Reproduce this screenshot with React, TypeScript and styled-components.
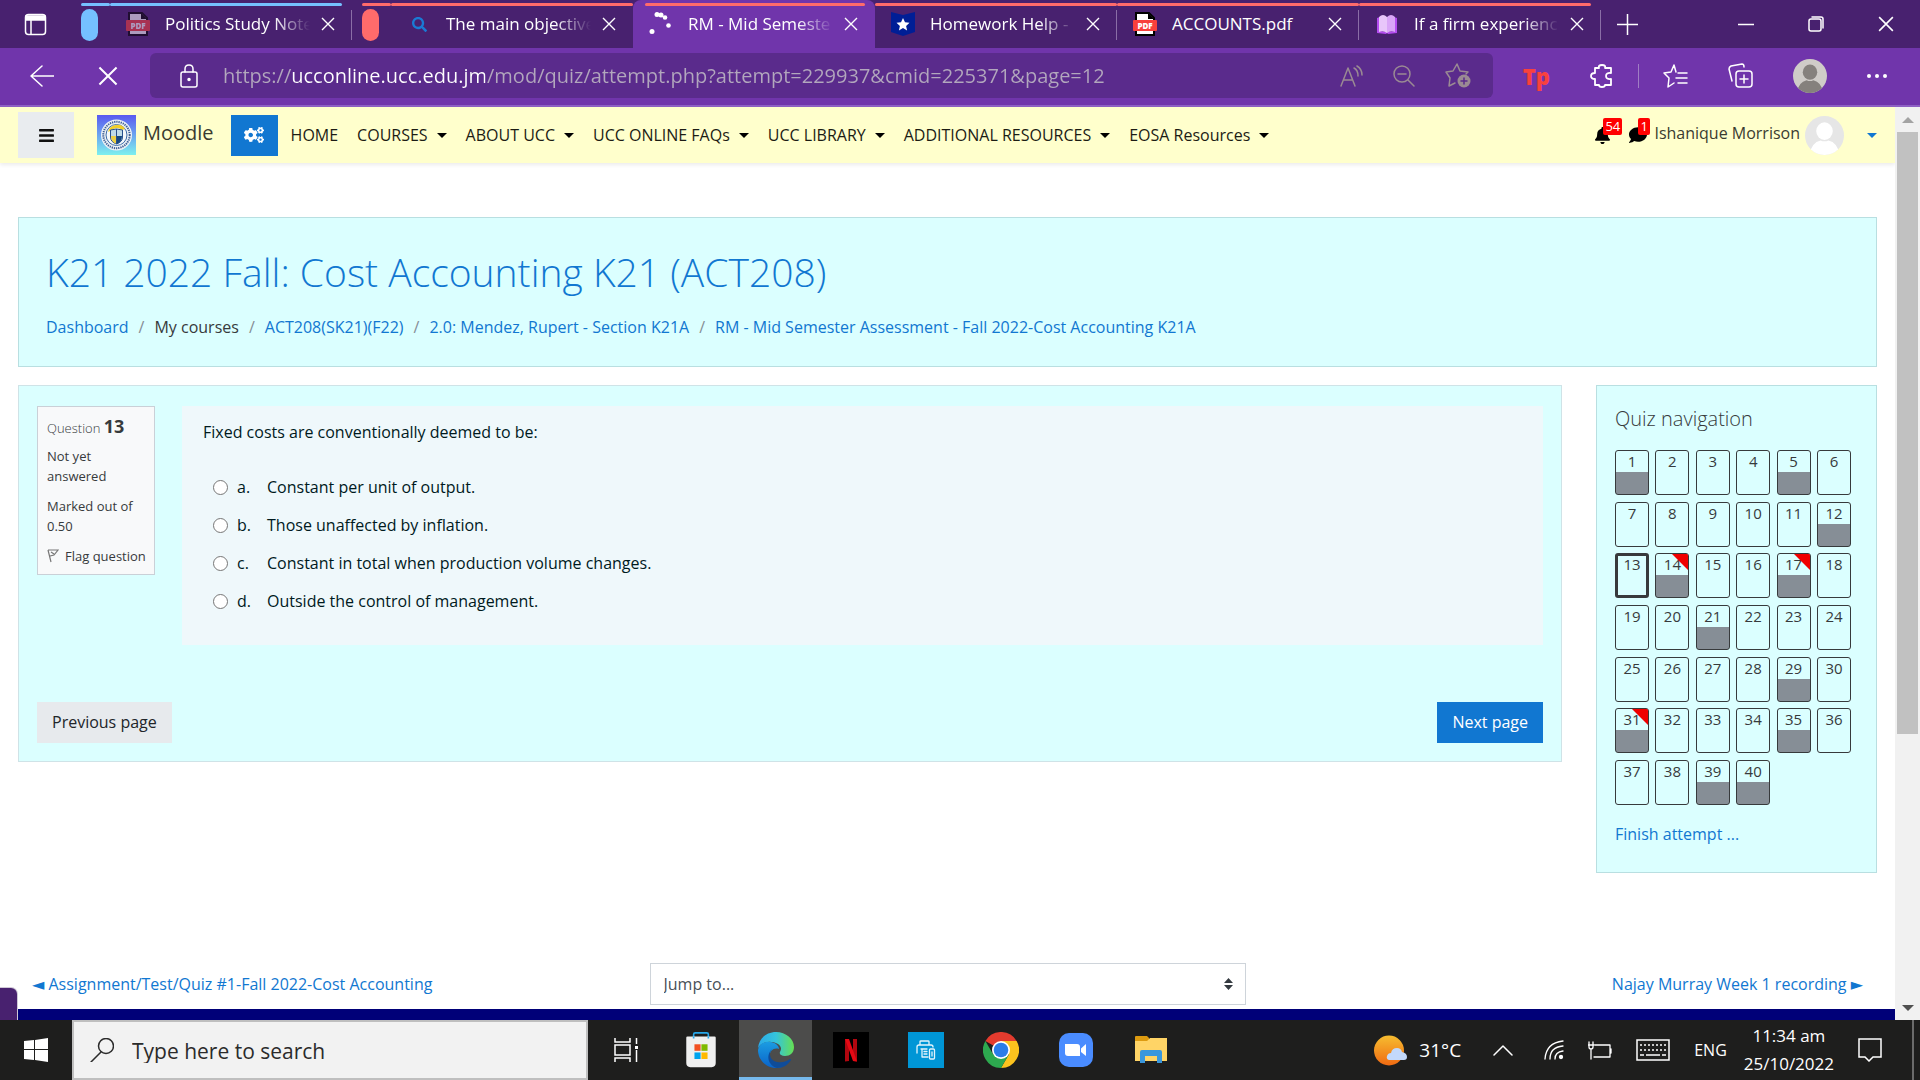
import React from "react";
import styled, { createGlobalStyle, css, keyframes } from "styled-components";
import { FaBars, FaBell, FaCogs, FaComment, FaSearch } from "react-icons/fa";

const GlobalStyle = createGlobalStyle`
  *, *::before, *::after { box-sizing: border-box; }
  body { margin: 0; overflow: hidden; }
  button, input, select { font: inherit; color: inherit; }
  button { border: 0; padding: 0; background: none; cursor: pointer; }
  a { text-decoration: none; }
  svg { display: block; flex: none; }
`;

const Screen = styled.div`
  display: flex;
  flex-direction: column;
  height: 100vh;
  font-family: "Open Sans", "Noto Sans", sans-serif;
  font-size: 16px;
  line-height: 24px;
  color: #373a3c;
  background: #fff;
`;

/* ---------- Tab strip ---------- */

const TabStrip = styled.header`
  display: flex;
  flex: none;
  height: 48px;
  padding-left: 24px;
  background: #48216f;
  color: #fff;
  white-space: nowrap;
`;

const TabActions = styled.button`
  display: flex;
  align-items: center;
  width: 57px;
`;

const TabGroup = styled.div`
  display: flex;
  margin-right: 10px;
`;

const Accent = styled.div<{ $color: string; $start?: boolean; $end?: boolean }>`
  height: 3px;
  margin: 3px ${(p) => (p.$end ? 10 : 0)}px 0 ${(p) => (p.$start ? 12 : 0)}px;
  background: ${(p) => p.$color};
  border-radius: 2px;
`;

const GroupLabel = styled.div`
  width: 29px;
`;

const Pill = styled.div<{ $color: string }>`
  width: 17px;
  height: 32px;
  margin-top: 3px;
  border-radius: 9px;
  background: ${(p) => p.$color};
`;

const Tab = styled.div<{ $active?: boolean; $divider?: boolean }>`
  position: relative;
  flex: 0 1 242px;
  width: 242px;
  ${(p) => p.$active && css`background: #7035ab; border-radius: 8px 8px 0 0;`}
  ${(p) =>
    p.$divider &&
    css`
      &::after {
        content: "";
        position: absolute;
        right: 0;
        top: 10px;
        width: 1px;
        height: 30px;
        background: #8a6ea6;
      }
    `}
`;

const TabBody = styled.div`
  display: flex;
  align-items: center;
  height: 36px;
  padding: 0 16px;
`;

const TabIcon = styled.span`
  display: flex;
  justify-content: center;
  width: 24px;
  margin-right: 15px;
`;

const TabTitle = styled.span<{ $fade?: boolean }>`
  flex: 0 0 145px;
  margin-right: 11px;
  overflow: hidden;
  font-size: 17px;
  ${(p) => p.$fade && css`mask-image: linear-gradient(90deg, #000 75%, transparent);`}
`;

const NewTab = styled.button`
  margin-left: 6px;
`;

const WindowControls = styled.div`
  display: flex;
  align-items: center;
  gap: 54px;
  margin-left: auto;
  padding-right: 26px;
`;

/* ---------- Address toolbar ---------- */

const Toolbar = styled.div`
  display: flex;
  flex: none;
  align-items: center;
  height: 59px;
  padding: 0 33px 2px 30px;
  background: #7035ab;
  border-bottom: 2px solid #8e60c4;
  color: #fff;
`;

const NavButtons = styled.div`
  display: flex;
  align-items: center;
  gap: 44px;
  width: 120px;
`;

const AddressBar = styled.div`
  display: flex;
  flex: 1;
  align-items: center;
  height: 45px;
  padding: 0 22px 0 30px;
  border-radius: 6px;
  background: #5a2b8c;
`;

const AddressInput = styled.input`
  flex: 1;
  min-width: 0;
  margin-left: 25px;
  padding: 0;
  border: 0;
  outline: 0;
  font-size: 20px;
  background: linear-gradient(90deg, #b2a7bd 68px, #fff 68px, #fff 262px, #b2a7bd 262px);
  background-clip: text;
  color: transparent;
`;

const AddressTools = styled.div`
  display: flex;
  align-items: center;
  gap: 30px;
  color: #9a8a93;
`;

const Extensions = styled.div`
  display: flex;
  align-items: center;
  gap: 40px;
  margin-left: 30px;
`;

const TpMark = styled.span`
  font-size: 22px;
  font-weight: 800;
  color: #f8413e;
`;

const ToolDivider = styled.span`
  width: 1px;
  height: 24px;
  margin: 0 -16px;
  background: #a07ec4;
`;

/* ---------- Page ---------- */

const Viewport = styled.div`
  position: relative;
  display: flex;
  flex: 1;
  min-height: 0;
`;

const Page = styled.div`
  display: flex;
  flex: 1;
  flex-direction: column;
  min-width: 0;
`;

const SiteBar = styled.nav`
  display: flex;
  flex: none;
  align-items: center;
  height: 56px;
  padding: 0 18px;
  background: #ffffcc;
  box-shadow: 0 2px 4px rgba(0, 0, 0, 0.08);
  color: #1c1c14;
  white-space: nowrap;
`;

const DrawerToggle = styled.button`
  display: flex;
  align-items: center;
  justify-content: center;
  width: 56px;
  height: 46px;
  background: #e9ecef;
  color: #111;
`;

const Brand = styled.a`
  display: flex;
  align-items: center;
  gap: 7px;
  margin: 0 17px 0 23px;
  font-size: 20px;
  color: #33352c;
`;

const BarLabel = styled.span`
  padding-bottom: 4px;
  color: #3a3b30;
`;

const CogButton = styled.button`
  display: flex;
  align-items: center;
  justify-content: center;
  width: 47px;
  height: 41px;
  margin-right: 13px;
  background: #1177d1;
  color: #fff;
`;

const Menu = styled.div`
  display: flex;
  gap: 19px;
`;

const MenuLink = styled.a`
  color: inherit;
`;

const MenuButton = styled.button`
  display: flex;
  align-items: center;
  gap: 9px;
`;

const Caret = styled.span<{ $color?: string }>`
  border: 5px solid transparent;
  border-top-color: ${(p) => p.$color ?? "#000"};
  border-bottom: 0;
`;

const UserArea = styled.div`
  display: flex;
  align-items: center;
  gap: 5px;
  margin-left: auto;
`;

const Notices = styled.div`
  display: flex;
  gap: 18px;
  margin-right: 2px;
`;

const Notice = styled.button`
  position: relative;
  color: #000;
`;

const Badge = styled.span`
  position: absolute;
  left: 9px;
  top: -8px;
  padding: 0 2px;
  border-radius: 2px;
  background: #f00;
  color: #fff;
  font-size: 13px;
  line-height: 17px;
`;

const UserMenu = styled.button`
  display: flex;
  margin-left: 18px;
`;

const Content = styled.main`
  padding: 54px 18px 0;
`;

const Card = styled.section`
  border: 1px solid #b9dfe1;
  background: #dbffff;
`;

const CourseHeader = styled(Card)`
  height: 150px;
  padding: 27px 27px 0;
`;

const CourseTitle = styled.h1`
  margin: 0 0 16px;
  font-size: 39px;
  font-weight: 300;
  line-height: 54px;
  color: #1177d1;
`;

const Crumbs = styled.ol`
  display: flex;
  margin: 0;
  padding: 0;
  list-style: none;
  color: #373a3c;

  li + li::before {
    content: "/";
    padding: 0 10px;
    color: #868e96;
  }
`;

const TextLink = styled.a`
  color: #1177d1;
`;

const Columns = styled.div`
  display: grid;
  grid-template-columns: minmax(0, 1fr) 281px;
  gap: 34px;
  align-items: start;
  margin-top: 18px;
`;

const QuizCard = styled(Card)`
  padding: 20px 18px 18px;
  border-color: #cfe3e7;
`;

const Question = styled.div`
  display: flex;
  align-items: flex-start;
  gap: 27px;
`;

const Info = styled.aside`
  width: 118px;
  height: 169px;
  padding: 9px 9px 0;
  border: 1px solid #cad0d7;
  background: #f8f9fa;
  font-size: 13px;
  line-height: 20px;
`;

const InfoTitle = styled.h3`
  margin: 0 0 8px;
  font-size: 13px;
  font-weight: 300;
  line-height: 20px;

  b {
    font-size: 18px;
    font-weight: 700;
  }
`;

const InfoText = styled.p`
  margin: 0 0 10px;
`;

const FlagButton = styled.button`
  display: flex;
  align-items: center;
  gap: 6px;
  white-space: nowrap;
`;

const Formulation = styled.div`
  flex: 1;
  height: 239px;
  padding: 14px 21px 0;
  background: #eff8fb;
  color: #001a1e;
`;

const Prompt = styled.p`
  margin: 0;
`;

const Answers = styled.fieldset`
  margin: 24px 0 0;
  padding: 0 0 0 10px;
  border: 0;
`;

const Answer = styled.label`
  display: grid;
  grid-template-columns: 24px 30px 1fr;
  align-items: center;
  height: 38px;
`;

const Radio = styled.input`
  width: 15px;
  height: 15px;
  margin: 0;
  border: 1px solid #767676;
  border-radius: 50%;
  background: #fff;
  appearance: none;

  &:checked { box-shadow: inset 0 0 0 3px #fff; background: #1177d1; }
`;

const Pager = styled.div`
  display: flex;
  justify-content: space-between;
  margin-top: 57px;
`;

const PageButton = styled.button<{ $primary?: boolean }>`
  height: 41px;
  padding: 0 15px 2px 15px;
  background: ${(p) => (p.$primary ? "#1177d1" : "#e7eaed")};
  color: ${(p) => (p.$primary ? "#fff" : "#212529")};
`;

const NavCard = styled(Card)`
  height: 488px;
  padding: 18px 25px 0 18px;
`;

const NavTitle = styled.h2`
  margin: 0 0 16px;
  font-size: 20px;
  font-weight: 300;
  line-height: 30px;
`;

const NavGrid = styled.div`
  display: grid;
  grid-template-columns: repeat(6, 34px);
  justify-content: space-between;
  align-content: space-between;
  height: 355px;
  margin-bottom: 17px;
`;

const NavCell = styled.a<{ $answered?: boolean; $current?: boolean }>`
  position: relative;
  height: 45px;
  overflow: hidden;
  border: ${(p) => (p.$current ? 3 : 1)}px solid #373a3c;
  border-radius: 3px;
  background: ${(p) =>
    p.$answered ? "linear-gradient(transparent 21px, #868e96 21px)" : "transparent"};
  color: #373a3c;
  font-size: 15px;
  line-height: ${(p) => (p.$current ? 16 : 20)}px;
  text-align: center;
`;

const FlagCorner = styled.span`
  position: absolute;
  top: 0;
  right: 0;
  border: 8px solid #f00000;
  border-left-color: transparent;
  border-bottom-color: transparent;
`;

const ActivityNav = styled.div`
  display: grid;
  grid-template-columns: 1fr 596px 1fr;
  align-items: center;
  margin-top: auto;
  padding: 0 32px 4px;
`;

const ActivityLink = styled(TextLink)<{ $end?: boolean }>`
  justify-self: ${(p) => (p.$end ? "end" : "start")};
`;

const Pointer = styled.span`
  font-family: "DejaVu Sans", sans-serif;
  font-size: 16px;
`;

const JumpBox = styled.div`
  position: relative;
`;

const JumpSelect = styled.select`
  width: 100%;
  height: 42px;
  padding: 0 13px;
  border: 1px solid #ced4da;
  background: #fff;
  color: #495057;
  appearance: none;
`;

const JumpArrows = styled.svg`
  position: absolute;
  right: 13px;
  top: 15px;
`;

const FooterEdge = styled.footer`
  flex: none;
  height: 11px;
  background: #000078;
`;

const StatusStub = styled.div`
  position: absolute;
  left: 0;
  bottom: 0;
  width: 17px;
  height: 32px;
  border-radius: 0 6px 0 0;
  background: #48216f;
  box-shadow: 0 0 0 1px #cfc8d6;
  clip-path: inset(-1px -1px 0 0);
`;

const ScrollTrack = styled.div`
  display: flex;
  flex: none;
  flex-direction: column;
  align-items: center;
  width: 25px;
  padding: 10px 0 9px;
  background: #f1f1f1;
`;

const ScrollArrow = styled.span<{ $down?: boolean }>`
  border: 6px solid transparent;
  ${(p) =>
    p.$down
      ? css`border-top-color: #505050; border-bottom: 0;`
      : css`border-bottom-color: #a3a3a3; border-top: 0;`}
`;

const ScrollArea = styled.div`
  flex: 1;
  width: 21px;
  padding-top: 9px;
`;

const ScrollThumb = styled.div`
  height: 69%;
  background: #c1c1c1;
`;

/* ---------- Taskbar ---------- */

const Taskbar = styled.footer`
  display: flex;
  flex: none;
  align-items: stretch;
  height: 60px;
  background: #1e1e1d;
  color: #fff;
`;

const StartButton = styled.button`
  display: flex;
  align-items: center;
  justify-content: center;
  width: 72px;
`;

const SearchBox = styled.label`
  display: flex;
  align-items: center;
  gap: 18px;
  width: 516px;
  padding: 0 16px;
  border: 2px solid #bfbfbf;
  background: #f2f2f2;
  color: #2b2b2b;
`;

const SearchInput = styled.input`
  flex: 1;
  min-width: 0;
  padding: 2px 0 0;
  border: 0;
  outline: 0;
  background: none;
  font-size: 21px;

  &::placeholder { color: #2b2b2b; opacity: 1; }
`;

const Apps = styled.div`
  display: flex;
  gap: 2px;
  padding-left: 1px;
`;

const AppButton = styled.button<{ $active?: boolean }>`
  display: flex;
  align-items: center;
  justify-content: center;
  width: 73px;
  ${(p) => p.$active && css`background: #4c4c4b; box-shadow: inset 0 -3px #76b9ed;`}
`;

const Tray = styled.div`
  display: flex;
  align-items: center;
  margin-left: auto;
  padding-right: 6px;
`;

const Weather = styled.button`
  display: flex;
  align-items: center;
  gap: 11px;
  margin-right: 32px;
  font-size: 19px;
`;

const TrayChevron = styled.button`
  margin-right: 31px;
`;

const TrayIcons = styled.div`
  display: flex;
  align-items: center;
  gap: 24px;
`;

const Clock = styled.div`
  margin: 0 24px 0 17px;
  font-size: 17px;
  line-height: 28px;
  text-align: center;
`;

const ShowDesktop = styled.span`
  width: 2px;
  height: 60px;
  margin-left: 30px;
  background: #6b6b6b;
`;

/* ---------- Drawings ---------- */

const CloseIcon = ({ size = 14 }: { size?: number }) => (
  <svg width={size} height={size} viewBox="0 0 14 14" stroke="currentColor" strokeWidth="1.4">
    <path d="M1 1l12 12M13 1L1 13" />
  </svg>
);

const PdfIcon = ({ dim }: { dim?: boolean }) => (
  <svg width="24" height="24" viewBox="0 0 24 24" opacity={dim ? 0.55 : 1}>
    <path d="M3 1h13l5 5v17H3z" fill="#fff" stroke="#000" strokeWidth="2" />
    <path d="M15 1v6h6z" fill="#000" />
    <rect x="0" y="8" width="24" height="11" rx="1" fill="#f8403c" />
    <text x="12" y="17" textAnchor="middle" fontSize="8" fontWeight="800" fill="#fff">PDF</text>
  </svg>
);

const spin = keyframes`to { transform: rotate(360deg); }`;
const SpinSvg = styled.svg`
  transform-origin: center;
  &:hover { animation: ${spin} 1s linear infinite; }
`;

const LoadingIcon = () => (
  <SpinSvg width="24" height="24" viewBox="0 0 24 24" fill="#fff">
    <circle cx="8" cy="2.600" r="2.500" /><circle cx="12" cy="3" r="2.500" /><circle cx="16" cy="5.500" r="2.300" />
    <circle cx="19.500" cy="13.500" r="2.300" /><circle cx="3" cy="19.500" r="2.500" />
  </SpinSvg>
);

const StarShield = () => (
  <svg width="24" height="24" viewBox="0 0 24 24">
    <path d="M0 0l12 3 12-3v20l-12 4-12-4z" fill="#001e96" />
    <path d="M12 6l2 4.300 4.500.5-3.400 3.100 1 4.600-4.100-2.400-4.100 2.400 1-4.600L5.500 10.800l4.500-.5z" fill="#fff" />
  </svg>
);

const BookIcon = () => (
  <svg width="24" height="24" viewBox="0 0 24 24">
    <path d="M2 6l3-1v14l7 1 7-1V5l3 1v15l-9 1-1-1-1 1-9-1z" fill="#b44df0" />
    <path d="M4 5q4-4 8 0v16q-4-3-8-1z" fill="#e8c6fa" />
    <path d="M20 5q-4-4-8 0v16q4-3 8-1z" fill="#d9a6f7" />
  </svg>
);

const Person = ({ size, bg, fg }: { size: number; bg: string; fg: string }) => (
  <svg width={size} height={size} viewBox="0 0 40 40">
    <clipPath id={"clip" + size}><circle cx="20" cy="20" r="20" /></clipPath>
    <g clipPath={`url(#clip${size})`}>
      <rect width="40" height="40" fill={bg} />
      <ellipse cx="20" cy="15.500" rx="8.500" ry="9" fill={fg} />
      <path d="M4 42q2-15 12-17 4 2 8 0 10 2 12 17z" fill={fg} />
    </g>
  </svg>
);

const Crest = () => (
  <svg width="39" height="40" viewBox="0 0 39 40">
    <defs>
      <linearGradient id="crestSky" x2="0" y2="1"><stop stopColor="#5a5af0" /><stop offset="1" stopColor="#7df0ee" /></linearGradient>
    </defs>
    <rect width="39" height="40" fill="url(#crestSky)" />
    <circle cx="19.500" cy="20" r="15.500" fill="#eef3f6" />
    <circle cx="19.500" cy="20" r="13.200" fill="none" stroke="#3f5f96" strokeWidth="2" strokeDasharray="1.300 0.900" />
    <circle cx="19.500" cy="20" r="10.500" fill="#f4f8fa" stroke="#3c6ba8" />
    <path d="M11 17q1-6 8-7 6-1 9 4l-3 1q-5-4-10 0z" fill="#f0cf2a" />
    <path d="M13.500 15l6-1 6 1v7q0 5-6 7-6-2-6-7z" fill="#bfdbe8" stroke="#28508c" />
    <path d="M19.500 21H25q0 6-5.500 8z" fill="#17477f" />
    <path d="M14 21h5.500v8Q14 27 14 21z" fill="#ecd044" />
    <path d="M19.500 14v15" stroke="#28508c" />
  </svg>
);

const line = { fill: "none", stroke: "currentColor", strokeWidth: 1.5, strokeLinejoin: "round", strokeLinecap: "round" } as const;

const StoreIcon = () => (
  <svg width="36" height="44" viewBox="0 0 36 44">
    <path d="M9 8V3q0-2 2-2h14q2 0 2 2v5" fill="none" stroke="#28a8ea" strokeWidth="2" />
    <path d="M0 7q0-1.500 1.500-1.500h33Q36 5.500 36 7v31q0 5-5 5H5q-5 0-5-5z" fill="#f0f0f0" />
    <path d="M9 8V5.500M27 8V5.500" stroke="#28a8ea" strokeWidth="2" />
    <path d="M10 15h7.500v8H10z" fill="#f25022" /><path d="M18.500 15H26v8h-7.500z" fill="#7fba00" />
    <path d="M10 25h7.500v8H10z" fill="#00a4ef" /><path d="M18.500 25H26v8h-7.500z" fill="#ffb900" />
  </svg>
);

const StoreFrame = styled.span`
  display: flex;
  justify-content: center;
  width: 36px;
  height: 36px;

  svg { height: 36px; }
`;

const EdgeIcon = () => (
  <svg width="36" height="36" viewBox="0 0 36 36">
    <defs>
      <linearGradient id="edgeTop"><stop stopColor="#2aa9e8" /><stop offset=".5" stopColor="#35c4dc" /><stop offset="1" stopColor="#66e052" /></linearGradient>
      <linearGradient id="edgeLow" x2="0" y2="1"><stop stopColor="#1b9de2" /><stop offset="1" stopColor="#0a63c9" /></linearGradient>
    </defs>
    <path d="M0 16C1 6 9 0 18 0c10 0 18 7 18 15 0 6-4 9-9 9-4 0-6-2-5-4 2-3 1-6-2-8C13 8 4 9 0 16z" fill="url(#edgeTop)" />
    <path d="M0 18C1 11 8 9 13 10c5 1 8 4 8 7-6-2-10 3-9 8 1 6 6 10 12 10C12 39 0 30 0 18z" fill="url(#edgeLow)" />
    <path d="M14 17c-4 4-2 12 5 13 6 1 10-1 13-3 1 0 1 1 1 1-3 5-8 8-14 8-8-2-12-12-5-19z" fill="#0f4c99" />
  </svg>
);

const NetflixIcon = () => (
  <svg width="36" height="36" viewBox="0 0 36 36">
    <rect width="36" height="36" fill="#000" />
    <path d="M12 7h4v22l-4 .5zM20 7h4v22.500l-4-.5z" fill="#b1060f" />
    <path d="M12 7h4l8 22.500-4-.5z" fill="#e50914" />
  </svg>
);

const PrinterIcon = () => (
  <svg width="36" height="36" viewBox="0 0 36 36" {...line} strokeWidth={1.3} color="#e3f4fc">
    <rect width="36" height="36" fill="#0096d6" stroke="none" />
    <path d="M12 12V9.500Q12 9 13 9h7q1 0 1 .5V12M9 21v-6q0-2 2-2h12q2 0 2 2M13 17h6M14 17v8h6M16 19.500h3M16 22h3" />
    <rect x="21.500" y="17" width="5" height="10" rx="1" />
    <path d="M24 20v4" />
  </svg>
);

const ChromeIcon = () => (
  <svg width="36" height="36" viewBox="0 0 36 36">
    <path d="M18 18L2.400 9A18 18 0 0 1 33.600 9z" fill="#e33b2e" />
    <path d="M18 9h15.600A18 18 0 0 1 18 36l7.800-13.500z" fill="#fcc31e" />
    <path d="M10.200 22.500L2.400 9A18 18 0 0 0 18 36l7.800-13.500z" fill="#2da94f" />
    <circle cx="18" cy="18" r="9" fill="#fff" /><circle cx="18" cy="18" r="7.300" fill="#2a7de9" />
  </svg>
);

const ZoomIcon = () => (
  <svg width="34" height="34" viewBox="0 0 34 34">
    <rect width="34" height="34" rx="10" fill="#4a8cff" />
    <path d="M6 11h12q3 0 3 3v9H9q-3 0-3-3z" fill="#fff" /><path d="M22 15.500l5-4.500v12l-5-4z" fill="#fff" />
  </svg>
);

const FolderIcon = () => (
  <svg width="32" height="28" viewBox="0 0 32 28">
    <path d="M0 1q0-1 1-1h11l2 2v4H0z" fill="#dd9b10" />
    <path d="M0 5h12l3-3h17v23H0z" fill="#ffd466" />
    <path d="M5 27V16q0-2 2-2h18q2 0 2 2v11h-5v-7H10v7z" fill="#3a97dc" />
  </svg>
);

/* ---------- Data ---------- */

const RED = "#ff6b6b";
const BLUE = "#75c0ff";

const menus = ["COURSES", "ABOUT UCC", "UCC ONLINE FAQs", "UCC LIBRARY", "ADDITIONAL RESOURCES", "EOSA Resources"];

const answers = [
  ["a.", "Constant per unit of output."],
  ["b.", "Those unaffected by inflation."],
  ["c.", "Constant in total when production volume changes."],
  ["d.", "Outside the control of management."],
];

const answered = new Set([1, 5, 12, 14, 17, 21, 29, 31, 35, 39, 40]);
const flagged = new Set([14, 17, 31]);
const current = 13;

type TabProps = {
  icon: React.ReactNode;
  title: string;
  color: string;
  fade?: boolean;
  active?: boolean;
  divider?: boolean;
  last?: boolean;
};

const BrowserTab = ({ icon, title, color, fade = true, active, divider, last }: TabProps) => (
  <Tab $active={active} $divider={divider}>
    <Accent $color={color} $start={active} $end={active || last} />
    <TabBody>
      <TabIcon>{icon}</TabIcon>
      <TabTitle $fade={fade}>{title}</TabTitle>
      <button aria-label={`Close ${title}`}><CloseIcon /></button>
    </TabBody>
  </Tab>
);

export default function App() {
  return (
    <Screen>
      <GlobalStyle />
      <TabStrip>
        <TabActions aria-label="Tab actions">
          <svg width="23" height="23" viewBox="0 0 23 23" {...line}>
            <rect x="1.500" y="1.500" width="20" height="20" rx="3" /><path d="M2 3h19v4H2z" fill="currentColor" /><path d="M7 7v14" />
          </svg>
        </TabActions>
        <TabGroup>
          <GroupLabel><Accent $color={BLUE} /><Pill $color={BLUE} /></GroupLabel>
          <BrowserTab icon={<PdfIcon dim />} title="Politics Study Note" color={BLUE} divider last />
        </TabGroup>
        <TabGroup>
          <GroupLabel><Accent $color={RED} /><Pill $color={RED} /></GroupLabel>
          <BrowserTab icon={<FaSearch size={15} color="#1a7ad4" />} title="The main objective" color={RED} />
          <BrowserTab icon={<LoadingIcon />} title="RM - Mid Semeste" color={RED} active />
          <BrowserTab icon={<StarShield />} title="Homework Help -" color={RED} divider />
          <BrowserTab icon={<PdfIcon />} title="ACCOUNTS.pdf" color={RED} fade={false} divider />
          <BrowserTab icon={<BookIcon />} title="If a firm experienc" color={RED} divider last />
        </TabGroup>
        <NewTab aria-label="New tab">
          <svg width="21" height="21" viewBox="0 0 21 21" {...line}><path d="M10.500 0v21M0 10.500h21" /></svg>
        </NewTab>
        <WindowControls>
          <button aria-label="Minimize"><svg width="16" height="16" viewBox="0 0 16 16" {...line}><path d="M0 8.500h16" /></svg></button>
          <button aria-label="Restore">
            <svg width="16" height="16" viewBox="0 0 16 16" {...line}><rect x="1" y="3" width="12" height="12" rx="2" /><path d="M4 1h9q2 0 2 2v9" /></svg>
          </button>
          <button aria-label="Close window"><CloseIcon size={16} /></button>
        </WindowControls>
      </TabStrip>

      <Toolbar>
        <NavButtons>
          <button aria-label="Back"><svg width="24" height="22" viewBox="0 0 24 22" {...line}><path d="M12 1L1 11l11 10M1 11h23" /></svg></button>
          <button aria-label="Stop loading"><CloseIcon size={20} /></button>
        </NavButtons>
        <AddressBar>
          <svg width="18" height="24" viewBox="0 0 18 24" {...line}>
            <rect x="1" y="8" width="16" height="15" rx="2" /><path d="M5 8V5q0-4 4-4t4 4v3" /><circle cx="9" cy="15.500" r="1" fill="currentColor" />
          </svg>
          <AddressInput
            aria-label="Address"
            defaultValue="https://ucconline.ucc.edu.jm/mod/quiz/attempt.php?attempt=229937&cmid=225371&page=12"
          />
          <AddressTools>
            <button aria-label="Read aloud">
              <svg width="23" height="22" viewBox="0 0 23 22" {...line}><path d="M1 21L8 3l7 18M4 15h8M14 3q4 2 4 8M17 1q5 3 5 9" /></svg>
            </button>
            <button aria-label="Zoom out">
              <svg width="22" height="22" viewBox="0 0 22 22" {...line}><circle cx="9" cy="9" r="8" /><path d="M5 9h8M15 15l6 6" /></svg>
            </button>
            <button aria-label="Add to favorites">
              <svg width="26" height="25" viewBox="0 0 26 25" {...line}>
                <path d="M10 20l-6 3 1-8-4-6 7-1 4-7 3 7 8 1-2 2" /><circle cx="19" cy="18" r="6.500" fill="currentColor" stroke="none" /><path d="M19 15v6M16 18h6" stroke="#5a2b8c" />
              </svg>
            </button>
          </AddressTools>
        </AddressBar>
        <Extensions>
          <TpMark>Tp</TpMark>
          <button aria-label="Extensions">
            <svg width="24" height="24" viewBox="0 0 24 24" {...line} strokeWidth={1.8}>
              <path d="M5 4h4q-1-3 3-3t3 3h6v5q-5-.5-5 3t5 3v6h-6q0 2-3 2t-3-2H5v-6q-4 0-4-3t4-3z" />
            </svg>
          </button>
          <ToolDivider />
          <button aria-label="Favorites">
            <svg width="25" height="24" viewBox="0 0 25 24" {...line}><path d="M13 8L11 1 8 8l-7 1 5 5-1 9 6-4M15 9h9M13 14h11M15 19h9" /></svg>
          </button>
          <button aria-label="Collections">
            <svg width="25" height="25" viewBox="0 0 25 25" {...line}><path d="M4 18L1 6q0-2 2-3l11-2q2 0 2 3" /><rect x="8" y="8" width="16" height="16" rx="3" /><path d="M16 12v8M12 16h8" /></svg>
          </button>
          <button aria-label="Profile"><Person size={34} bg="#cfccc8" fg="#85817d" /></button>
          <button aria-label="More">
            <svg width="20" height="4" viewBox="0 0 20 4" fill="#fff"><circle cx="2" cy="2" r="2" /><circle cx="10" cy="2" r="2" /><circle cx="18" cy="2" r="2" /></svg>
          </button>
        </Extensions>
      </Toolbar>

      <Viewport>
        <Page>
          <SiteBar>
            <DrawerToggle aria-label="Side panel"><FaBars size={17} /></DrawerToggle>
            <Brand href="#"><Crest /><BarLabel>Moodle</BarLabel></Brand>
            <CogButton aria-label="Settings"><FaCogs size={20} /></CogButton>
            <Menu>
              <MenuLink href="#">HOME</MenuLink>
              {menus.map((m) => <MenuButton key={m}>{m}<Caret /></MenuButton>)}
            </Menu>
            <UserArea>
              <Notices>
                <Notice aria-label="Notifications"><FaBell size={17} /><Badge>54</Badge></Notice>
                <Notice aria-label="Messages"><FaComment size={18} /><Badge>1</Badge></Notice>
              </Notices>
              <BarLabel>Ishanique Morrison</BarLabel>
              <Person size={39} bg="#e6e6e6" fg="#fff" />
              <UserMenu aria-label="User menu"><Caret $color="#1177d1" /></UserMenu>
            </UserArea>
          </SiteBar>

          <Content>
            <CourseHeader>
              <CourseTitle>K21 2022 Fall: Cost Accounting K21 (ACT208)</CourseTitle>
              <Crumbs>
                <li><TextLink href="#">Dashboard</TextLink></li>
                <li>My courses</li>
                <li><TextLink href="#">ACT208(SK21)(F22)</TextLink></li>
                <li><TextLink href="#">2.0: Mendez, Rupert - Section K21A</TextLink></li>
                <li><TextLink href="#">RM - Mid Semester Assessment - Fall 2022-Cost Accounting K21A</TextLink></li>
              </Crumbs>
            </CourseHeader>

            <Columns>
              <QuizCard>
                <Question>
                  <Info>
                    <InfoTitle>Question <b>13</b></InfoTitle>
                    <InfoText>Not yet answered</InfoText>
                    <InfoText>Marked out of 0.50</InfoText>
                    <FlagButton>
                      <svg width="12" height="14" viewBox="0 0 12 14" fill="none" stroke="#777" strokeWidth="1.200"><path d="M1 1l3 12M1 1h10L7 6 3 7M4 3l3 2" /></svg>
                      Flag question
                    </FlagButton>
                  </Info>
                  <Formulation>
                    <Prompt>Fixed costs are conventionally deemed to be:</Prompt>
                    <Answers aria-label="Answer">
                      {answers.map(([letter, text]) => (
                        <Answer key={letter}>
                          <Radio type="radio" name="answer" />
                          <span>{letter}</span>
                          <span>{text}</span>
                        </Answer>
                      ))}
                    </Answers>
                  </Formulation>
                </Question>
                <Pager>
                  <PageButton>Previous page</PageButton>
                  <PageButton $primary>Next page</PageButton>
                </Pager>
              </QuizCard>

              <NavCard>
                <NavTitle>Quiz navigation</NavTitle>
                <NavGrid>
                  {Array.from({ length: 40 }, (_, i) => i + 1).map((n) => (
                    <NavCell key={n} href="#" $answered={answered.has(n)} $current={n === current}>
                      {flagged.has(n) && <FlagCorner />}
                      {n}
                    </NavCell>
                  ))}
                </NavGrid>
                <TextLink href="#">Finish attempt ...</TextLink>
              </NavCard>
            </Columns>
          </Content>

          <ActivityNav>
            <ActivityLink href="#"><Pointer>◄</Pointer> Assignment/Test/Quiz #1-Fall 2022-Cost Accounting</ActivityLink>
            <JumpBox>
              <JumpSelect aria-label="Jump to"><option>Jump to...</option></JumpSelect>
              <JumpArrows width="9" height="12" viewBox="0 0 9 12" fill="#343a40"><path d="M0 5l4.500-5L9 5zM0 7h9l-4.500 5z" /></JumpArrows>
            </JumpBox>
            <ActivityLink href="#" $end>Najay Murray Week 1 recording <Pointer>►</Pointer></ActivityLink>
          </ActivityNav>
          <FooterEdge />
        </Page>
        <ScrollTrack>
          <ScrollArrow />
          <ScrollArea><ScrollThumb /></ScrollArea>
          <ScrollArrow $down />
        </ScrollTrack>
        <StatusStub />
      </Viewport>

      <Taskbar>
        <StartButton aria-label="Start">
          <svg width="24" height="24" viewBox="0 0 24 24" fill="#fff"><path d="M0 3l10-1v9H0zM11 2l13-2v11H11zM0 12h10v10L0 21zM11 12h13v12l-13-2z" /></svg>
        </StartButton>
        <SearchBox>
          <svg width="24" height="24" viewBox="0 0 24 24" {...line}><circle cx="16" cy="8" r="7.500" /><path d="M11 14L1 24" /></svg>
          <SearchInput aria-label="Search" placeholder="Type here to search" />
        </SearchBox>
        <Apps>
          <AppButton aria-label="Task view">
            <svg width="24" height="24" viewBox="0 0 24 24" fill="none" stroke="#fff" strokeWidth="1.500"><path d="M1 0v4h15V0M1 24v-4h15v4M1 7h15v10H1zM22.500 0v6M22.500 12v12" /><path d="M21 8h3v3h-3z" fill="#fff" stroke="none" /></svg>
          </AppButton>
          <AppButton aria-label="Store"><StoreFrame><StoreIcon /></StoreFrame></AppButton>
          <AppButton aria-label="Edge" $active><EdgeIcon /></AppButton>
          <AppButton aria-label="Netflix"><NetflixIcon /></AppButton>
          <AppButton aria-label="Printer"><PrinterIcon /></AppButton>
          <AppButton aria-label="Chrome"><ChromeIcon /></AppButton>
          <AppButton aria-label="Zoom"><ZoomIcon /></AppButton>
          <AppButton aria-label="File Explorer"><FolderIcon /></AppButton>
        </Apps>
        <Tray>
          <Weather>
            <svg width="34" height="31" viewBox="0 0 34 31">
              <defs><linearGradient id="sun" x2="0" y2="1"><stop stopColor="#f6bd30" /><stop offset="1" stopColor="#f06a12" /></linearGradient></defs>
              <circle cx="15" cy="15.500" r="15" fill="url(#sun)" />
              <path d="M15 25q-3-1-2-4 1-3 4-3 1-5 6-5 4 0 5 4 5 1 5 5 0 3-3 3z" fill="#c3d9fb" />
            </svg>
            31°C
          </Weather>
          <TrayChevron aria-label="Show hidden icons">
            <svg width="20" height="11" viewBox="0 0 20 11" {...line}><path d="M1 10l9-9 9 9" /></svg>
          </TrayChevron>
          <TrayIcons>
            <svg width="20" height="20" viewBox="0 0 20 20" {...line} strokeWidth={1.3}><path d="M1 19Q2 3 19 1M6 19q0-12 13-13M11 19q0-7 8-8" /><circle cx="17" cy="17" r="1.500" fill="#fff" /></svg>
            <svg width="24" height="19" viewBox="0 0 24 19" {...line} strokeWidth={1.3}><path d="M7 4h15v12H6M23 8v4M1 1v5q0 2 2 2t2-2V1M0 4h6M3 8v10" /></svg>
            <svg width="34" height="22" viewBox="0 0 34 22" fill="none" stroke="#fff" strokeWidth="1.500"><rect x="1" y="1" width="32" height="20" /><path d="M4 6h26M4 11h26" strokeDasharray="2 2" /><path d="M4 16h4M10 16h14M26 16h4" /></svg>
            <span>ENG</span>
          </TrayIcons>
          <Clock><div>11:34 am</div><div>25/10/2022</div></Clock>
          <svg width="24" height="24" viewBox="0 0 24 24" fill="none" stroke="#fff" strokeWidth="1.500"><path d="M1 1h22v18h-8l-4 4-4-4H1z" /></svg>
          <ShowDesktop />
        </Tray>
      </Taskbar>
    </Screen>
  );
}
